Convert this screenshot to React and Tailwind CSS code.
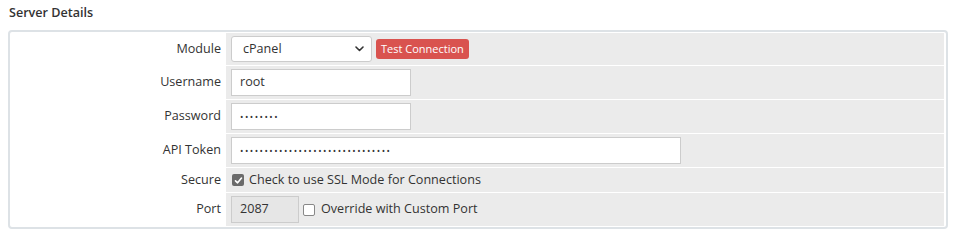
import React from "react";

function Dots({ n }) {
  return (
    <span className="text-[9px] tracking-[1.5px] leading-none text-[#333]">{"•".repeat(n)}</span>
  );
}

function Row({ label, children, h }) {
  return (
    <>
      <div className="flex items-center justify-end pr-[4px] text-[12.6px] text-[#333] bg-white">{label}</div>
      <div className={`flex items-center bg-[#ebebeb] pl-[5px] py-[3px] ${h}`}>{children}</div>
    </>
  );
}

export default function App() {
  return (
    <div className="w-[957px] h-[234px] bg-white" style={{ fontFamily: '"Open Sans", sans-serif' }}>
      <div className="pt-[4px] pl-[9px] text-[12.6px] font-semibold leading-[18px] text-[#333]">Server Details</div>
      <div className="mt-[8px] ml-[8px] w-[940px] border-2 border-[#dde2e6] rounded-[4px] pt-[1px] pb-[1px] pl-[1px] pr-[2px]">
        <div className="grid grid-cols-[214px_1fr] gap-[1px] bg-white">
          <Row label="Module" h="h-[32px]">
            <div className="relative w-[141px] h-[26px] bg-white border border-[#cccccc] rounded-[3px] flex items-center pl-[11px] text-[12.6px] text-[#333]">
              cPanel
              <svg className="absolute right-[7px] top-[9px]" width="9" height="6" viewBox="0 0 9 6">
                <path d="M1 1 L4.5 4.5 L8 1" fill="none" stroke="#333" strokeWidth="1.6" strokeLinecap="round" strokeLinejoin="round" />
              </svg>
            </div>
            <button className="ml-[4px] h-[20px] px-[5px] bg-[#d9534f] rounded-[3px] text-white text-[11px] leading-[20px] whitespace-nowrap">Test Connection</button>
          </Row>
          <Row label="Username" h="h-[33px]">
            <div className="w-[180px] h-[27px] bg-white border border-[#cccccc] flex items-center pl-[8px] text-[12.6px] text-[#333]">root</div>
          </Row>
          <Row label="Password" h="h-[33px]">
            <div className="w-[180px] h-[27px] bg-white border border-[#cccccc] flex items-center pl-[8px]"><Dots n={8} /></div>
          </Row>
          <Row label="API Token" h="h-[33px]">
            <div className="w-[450px] h-[27px] bg-white border border-[#cccccc] flex items-center pl-[8px]"><Dots n={31} /></div>
          </Row>
          <Row label="Secure" h="h-[24px]">
            <span className="ml-[1px] w-[12px] h-[12px] rounded-[2px] bg-[#6b6b6b] flex items-center justify-center">
              <svg width="9" height="9" viewBox="0 0 9 9">
                <path d="M1.5 4.8 L3.6 6.8 L7.5 2" fill="none" stroke="white" strokeWidth="1.6" strokeLinecap="round" strokeLinejoin="round" />
              </svg>
            </span>
            <span className="ml-[5px] text-[12.6px] text-[#333]">Check to use SSL Mode for Connections</span>
          </Row>
          <Row label="Port" h="h-[33px]">
            <div className="w-[68px] h-[27px] bg-[#e6e6e6] border border-[#cccccc] flex items-center pl-[8px] text-[12.6px] text-[#333]">2087</div>
            <span className="ml-[4px] w-[12px] h-[12px] rounded-[2px] bg-white border border-[#888]"></span>
            <span className="ml-[6px] text-[12.6px] text-[#333]">Override with Custom Port</span>
          </Row>
        </div>
      </div>
    </div>
  );
}
